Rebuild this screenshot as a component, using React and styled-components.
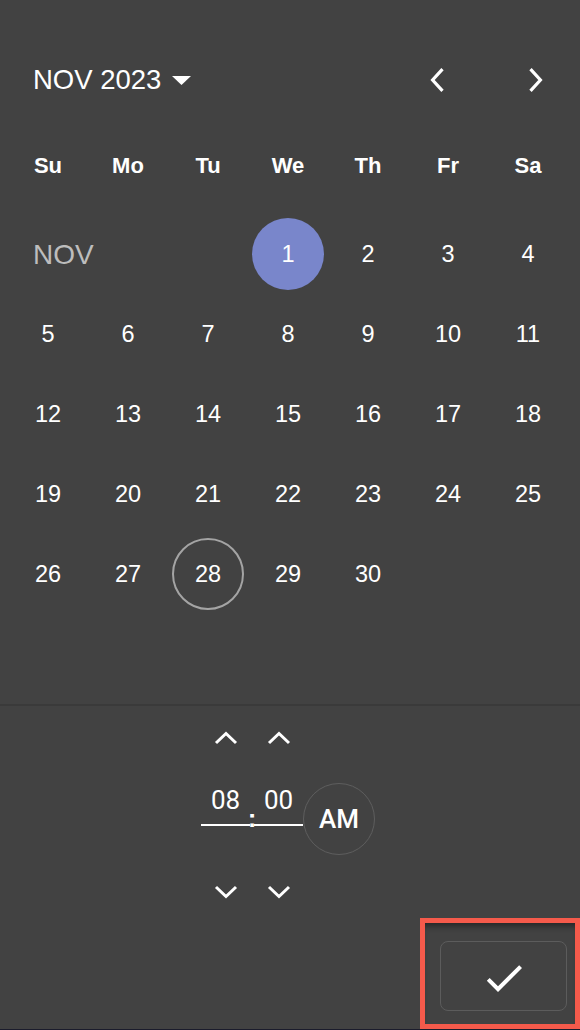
import React from "react";
import styled, { createGlobalStyle, css } from "styled-components";

const Global = createGlobalStyle`
  html, body {
    margin: 0;
    padding: 0;
    background: #1b1c2c;
  }
  body {
    font-family: "Liberation Sans", Arial, sans-serif;
  }
  * { box-sizing: border-box; }
`;

const Page = styled.div`
  position: relative;
  width: 580px;
  height: 1029px;
  background: #424242;
  color: #ffffff;
  display: flex;
  flex-direction: column;
  overflow: hidden;
`;

const Header = styled.div`
  margin-top: 56px;
  height: 48px;
  display: flex;
  align-items: center;
  padding: 0 21px 0 33px;
`;

const MonthTitle = styled.button`
  display: flex;
  align-items: center;
  gap: 11px;
  background: none;
  border: 0;
  padding: 0;
  color: #fff;
  font-family: "Liberation Sans", Arial, sans-serif;
  font-size: 27.5px;
  line-height: 1;
  cursor: pointer;
`;

const NavGroup = styled.div`
  margin-left: auto;
  display: flex;
  gap: 50px;
`;

const IconButton = styled.button`
  width: 48px;
  height: 48px;
  display: flex;
  align-items: center;
  justify-content: center;
  background: none;
  border: 0;
  padding: 0;
  cursor: pointer;
  svg { overflow: visible; display: block; }
`;

const WeekRow = styled.div`
  margin-top: 42px;
  display: grid;
  grid-template-columns: repeat(7, 80px);
  padding-left: 8px;
`;

const WeekDay = styled.div`
  height: 40px;
  display: flex;
  align-items: center;
  justify-content: center;
  font-weight: 700;
  font-size: 22px;
  line-height: 1;
`;

const DaysGrid = styled.div`
  margin-top: 28px;
  display: grid;
  grid-template-columns: repeat(7, 80px);
  grid-auto-rows: 80px;
  padding-left: 8px;
`;

const MonthLabel = styled.div`
  grid-column: span 3;
  display: flex;
  align-items: center;
  padding-left: 25px;
  padding-top: 2px;
  color: #bdbdbd;
  font-size: 28px;
  line-height: 1;
`;

const DayCell = styled.div`
  display: flex;
  align-items: center;
  justify-content: center;
`;

const DayButton = styled.button`
  width: 72px;
  height: 72px;
  border-radius: 50%;
  border: 0;
  background: transparent;
  color: #fff;
  font-family: "Liberation Sans", Arial, sans-serif;
  font-size: 23.5px;
  line-height: 1;
  display: flex;
  align-items: center;
  justify-content: center;
  padding: 2px 0 0;
  cursor: pointer;
  ${(p) =>
    p.$selected &&
    css`
      background: #7986cb;
    `}
  ${(p) =>
    p.$today &&
    css`
      border: 2px solid rgba(255, 255, 255, 0.52);
    `}
`;

const Divider = styled.div`
  margin-top: 90px;
  height: 2px;
  background: #3a3a3a;
`;

const TimeSection = styled.div`
  padding-top: 8px;
  padding-right: 4px;
  display: flex;
  justify-content: center;
  align-items: flex-start;
`;

const TimeColumn = styled.div`
  width: 49px;
  display: flex;
  flex-direction: column;
  align-items: center;
`;

const TimeField = styled.div`
  width: 100%;
  margin-top: 22px;
  padding-bottom: 8px;
  border-bottom: 2px solid #ffffff;
  text-align: center;
  font-family: Roboto, "Liberation Sans", sans-serif;
  font-weight: 400;
  font-size: 26px;
  line-height: 32px;
  color: #fff;
`;

const DownButton = styled(IconButton)`
  margin-top: 42px;
`;

const ColonCell = styled.div`
  width: 4px;
  margin-top: 91px;
  display: flex;
  justify-content: center;
  font-weight: 700;
  font-size: 26px;
  line-height: 26px;
  color: #fff;
`;

const AmButton = styled.button`
  margin-top: 69px;
  width: 72px;
  height: 72px;
  border-radius: 50%;
  border: 1px solid #5e5e5e;
  background: transparent;
  color: #fff;
  font-family: Roboto, "Liberation Sans", sans-serif;
  font-weight: 500;
  font-size: 26px;
  line-height: 1;
  padding: 0;
  display: flex;
  align-items: center;
  justify-content: center;
  cursor: pointer;
`;

const Footer = styled.div`
  display: flex;
  justify-content: flex-end;
  padding: 25px 13px 18px 0;
`;

const ConfirmButton = styled.button`
  width: 127px;
  height: 70px;
  border-radius: 8px;
  border: 1px solid #5c5c5c;
  background: transparent;
  display: flex;
  align-items: center;
  justify-content: center;
  padding: 3px 0 0;
  cursor: pointer;
`;

const Highlight = styled.div`
  position: absolute;
  right: 0;
  bottom: 0;
  width: 160px;
  height: 111px;
  border: 5px solid #f55a4b;
  box-shadow: inset 0 7px 6px -4px rgba(0, 0, 0, 0.45);
  pointer-events: none;
`;

const ChevronLeft = () => (
  <svg width="15" height="24" viewBox="0 0 15 24">
    <polyline points="12.5,1.2 2.6,12 12.5,22.8" fill="none" stroke="#fff" strokeWidth="3.2" />
  </svg>
);

const ChevronRight = () => (
  <svg width="15" height="24" viewBox="0 0 15 24">
    <polyline points="2.5,1.2 12.4,12 2.5,22.8" fill="none" stroke="#fff" strokeWidth="3.2" />
  </svg>
);

const ChevronUp = () => (
  <svg width="24" height="14" viewBox="0 0 24 14">
    <polyline points="2,12 12,2.5 22,12" fill="none" stroke="#fff" strokeWidth="3" />
  </svg>
);

const ChevronDown = () => (
  <svg width="24" height="14" viewBox="0 0 24 14">
    <polyline points="2,2 12,11.5 22,2" fill="none" stroke="#fff" strokeWidth="3" />
  </svg>
);

const Caret = () => (
  <svg width="19" height="9" viewBox="0 0 19 9">
    <polygon points="0,0 19,0 9.5,9" fill="#fff" />
  </svg>
);

const Check = () => (
  <svg width="48" height="48" viewBox="0 0 24 24">
    <path d="M9 16.17L4.83 12l-1.42 1.41L9 19 21 7l-1.41-1.41z" fill="#fff" />
  </svg>
);

const weekdays = ["Su", "Mo", "Tu", "We", "Th", "Fr", "Sa"];
const days = Array.from({ length: 30 }, (_, i) => i + 1);

export default function App() {
  return (
    <>
      <Global />
      <Page>
        <Header>
          <MonthTitle>
            NOV 2023
            <Caret />
          </MonthTitle>
          <NavGroup>
            <IconButton aria-label="Previous month">
              <ChevronLeft />
            </IconButton>
            <IconButton aria-label="Next month">
              <ChevronRight />
            </IconButton>
          </NavGroup>
        </Header>

        <WeekRow>
          {weekdays.map((d) => (
            <WeekDay key={d}>{d}</WeekDay>
          ))}
        </WeekRow>

        <DaysGrid>
          <MonthLabel>NOV</MonthLabel>
          {days.map((d) => (
            <DayCell key={d}>
              <DayButton $selected={d === 1} $today={d === 28}>
                {d}
              </DayButton>
            </DayCell>
          ))}
        </DaysGrid>

        <Divider />

        <TimeSection>
          <TimeColumn>
            <IconButton aria-label="Increase hours">
              <ChevronUp />
            </IconButton>
            <TimeField>08</TimeField>
            <DownButton aria-label="Decrease hours">
              <ChevronDown />
            </DownButton>
          </TimeColumn>
          <ColonCell>:</ColonCell>
          <TimeColumn>
            <IconButton aria-label="Increase minutes">
              <ChevronUp />
            </IconButton>
            <TimeField>00</TimeField>
            <DownButton aria-label="Decrease minutes">
              <ChevronDown />
            </DownButton>
          </TimeColumn>
          <AmButton>AM</AmButton>
        </TimeSection>

        <Footer>
          <ConfirmButton aria-label="Confirm">
            <Check />
          </ConfirmButton>
        </Footer>

        <Highlight />
      </Page>
    </>
  );
}
